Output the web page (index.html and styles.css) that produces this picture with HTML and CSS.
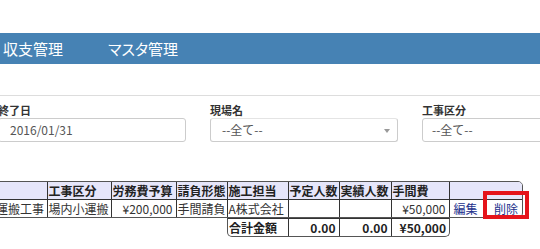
FILE: index.html
```html
<!DOCTYPE html>
<html lang="ja">
<head>
    <meta charset="UTF-8">
    <meta name="viewport" content="width=device-width, initial-scale=1.0">
    <title>収支管理</title>
    <link rel="stylesheet" href="styles.css">
</head>
<body>
    <div class="page">
        <div class="header"></div>

        <nav class="menu">
            <a class="menu-item" href="#">収支管理</a>
            <a class="menu-item" href="#">マスタ管理</a>
        </nav>

        <div class="search">
            <div class="field">
                <label>終了日</label>
                <div class="text-box">2016/01/31</div>
            </div>
            <div class="field">
                <label>現場名</label>
                <div class="select-box">--全て--<span class="arrow"></span></div>
            </div>
            <div class="field">
                <label>工事区分</label>
                <div class="text-box plain">--全て--</div>
            </div>
        </div>

        <div class="result">
            <div class="list-box">
                <table class="list">
                    <colgroup>
                        <col class="c-name">
                        <col class="c-kind">
                        <col class="c-budget">
                        <col class="c-type">
                        <col class="c-staff">
                        <col class="c-plan">
                        <col class="c-actual">
                        <col class="c-cost">
                        <col class="c-edit">
                        <col class="c-delete">
                    </colgroup>
                    <tr>
                        <th></th>
                        <th>工事区分</th>
                        <th>労務費予算</th>
                        <th>請負形態</th>
                        <th>施工担当</th>
                        <th>予定人数</th>
                        <th>実績人数</th>
                        <th>手間費</th>
                        <th colspan="2"></th>
                    </tr>
                    <tr>
                        <td>運搬工事</td>
                        <td>場内小運搬</td>
                        <td class="num">¥200,000</td>
                        <td>手間請負</td>
                        <td>A株式会社</td>
                        <td></td>
                        <td></td>
                        <td class="num">¥50,000</td>
                        <td class="op-edit"><a href="#">編集</a></td>
                        <td class="op-delete">
                            <a href="#">削除</a>
                            <span class="marker"></span>
                        </td>
                    </tr>
                </table>
            </div>

            <div class="total-box">
                <table class="total">
                    <colgroup>
                        <col class="t-label">
                        <col class="t-plan">
                        <col class="t-actual">
                        <col class="t-cost">
                    </colgroup>
                    <tr>
                        <td>合計金額</td>
                        <td class="num">0.00</td>
                        <td class="num">0.00</td>
                        <td class="num">¥50,000</td>
                    </tr>
                </table>
            </div>
        </div>
    </div>
</body>
</html>
```

FILE: styles.css
```css
html, body {
    margin: 0;
    padding: 0;
    overflow: hidden;
}
body {
    font-family: "Noto Sans CJK JP", sans-serif;
    color: #333;
    background-color: #fff;
}
.page {
    width: 540px;
    height: 249px;
    overflow: hidden;
}
.header {
    height: 33px;
}

/* menu bar */
.menu {
    display: flex;
    height: 31px;
    align-items: center;
    background-color: #4682b4;
    padding-left: 3px;
}
.menu-item {
    color: #fff;
    text-decoration: none;
    font-size: 15px;
    font-feature-settings: "palt";
    margin-right: 45px;
}

/* search form */
.search {
    display: flex;
    gap: 24px;
    margin-top: 31px;
    margin-left: -2px;
    padding-top: 7px;
    border-top: 1px solid #ddd;
}
.field {
    display: flex;
    flex-direction: column;
    flex: 0 0 188px;
}
.field label {
    font-size: 11px;
    font-weight: bold;
    line-height: 15px;
    color: #333;
}
.text-box,
.select-box {
    position: relative;
    height: 22px;
    line-height: 22px;
    border: 1px solid #ccc;
    border-radius: 3px;
    padding-left: 11px;
    font-size: 12px;
    color: #555;
}
.text-box.plain {
    padding-left: 9px;
}
.select-box {
    border-top-color: #e4e4e4;
}
.arrow {
    position: absolute;
    right: 7px;
    top: 10px;
    border-left: 3px solid transparent;
    border-right: 3px solid transparent;
    border-top: 4px solid #999;
}

/* result list */
.result {
    margin-top: 39px;
    margin-left: -6px;
}
.list-box {
    display: inline-block;
    vertical-align: top;
    border: 1px solid #555;
    border-radius: 5px;
}
.list,
.total {
    border-collapse: collapse;
    table-layout: fixed;
    font-size: 12px;
    line-height: 17px;
}
.list {
    width: 527px;
}
.list th,
.list td,
.total td {
    border: 1px solid #333;
    padding: 0 1px;
    white-space: nowrap;
    overflow: hidden;
    text-align: left;
}
.list tr:first-child th {
    border-top: none;
}
.list tr:last-child td {
    border-bottom: none;
}
.list th:first-child,
.list td:first-child,
.total td:first-child {
    border-left: none;
}
.list th:last-child,
.list td:last-child,
.total td:last-child {
    border-right: none;
}
.list th {
    background-color: #e6e6fa;
    font-weight: bold;
    color: #222;
}
.list th:last-child {
    border-top-right-radius: 4px;
}
.list td {
    color: #333;
}
.num {
    text-align: right !important;
    padding-right: 3px !important;
}
.c-name { width: 52px; }
.c-kind { width: 64px; }
.c-budget { width: 65px; }
.c-type { width: 51px; }
.c-staff { width: 61px; }
.c-plan { width: 51px; }
.c-actual { width: 52px; }
.c-cost { width: 58px; }
.c-edit { width: 37px; }
.c-delete { width: 36px; }

.list a {
    color: #23318c;
    text-decoration: none;
}
.op-edit {
    border-right: none !important;
    padding-left: 4px !important;
}
.op-delete {
    position: relative;
    overflow: visible !important;
    border-left: none !important;
    text-align: right !important;
    padding-right: 4px !important;
}
.marker {
    position: absolute;
    left: -3px;
    top: -9px;
    width: 38px;
    height: 20px;
    border: 4px solid #e5141b;
}

.total-box {
    margin-left: 233px;
    width: 221px;
    border: 1px solid #555;
    border-top-color: #333;
    border-radius: 0 0 5px 5px;
    overflow: hidden;
}
.total {
    width: 221px;
}
.t-label { width: 60px; }
.t-plan { width: 51px; }
.t-actual { width: 52px; }
.t-cost { width: 58px; }
.total td {
    font-weight: bold;
    color: #222;
    border-top: none;
    border-bottom: none;
}
```
